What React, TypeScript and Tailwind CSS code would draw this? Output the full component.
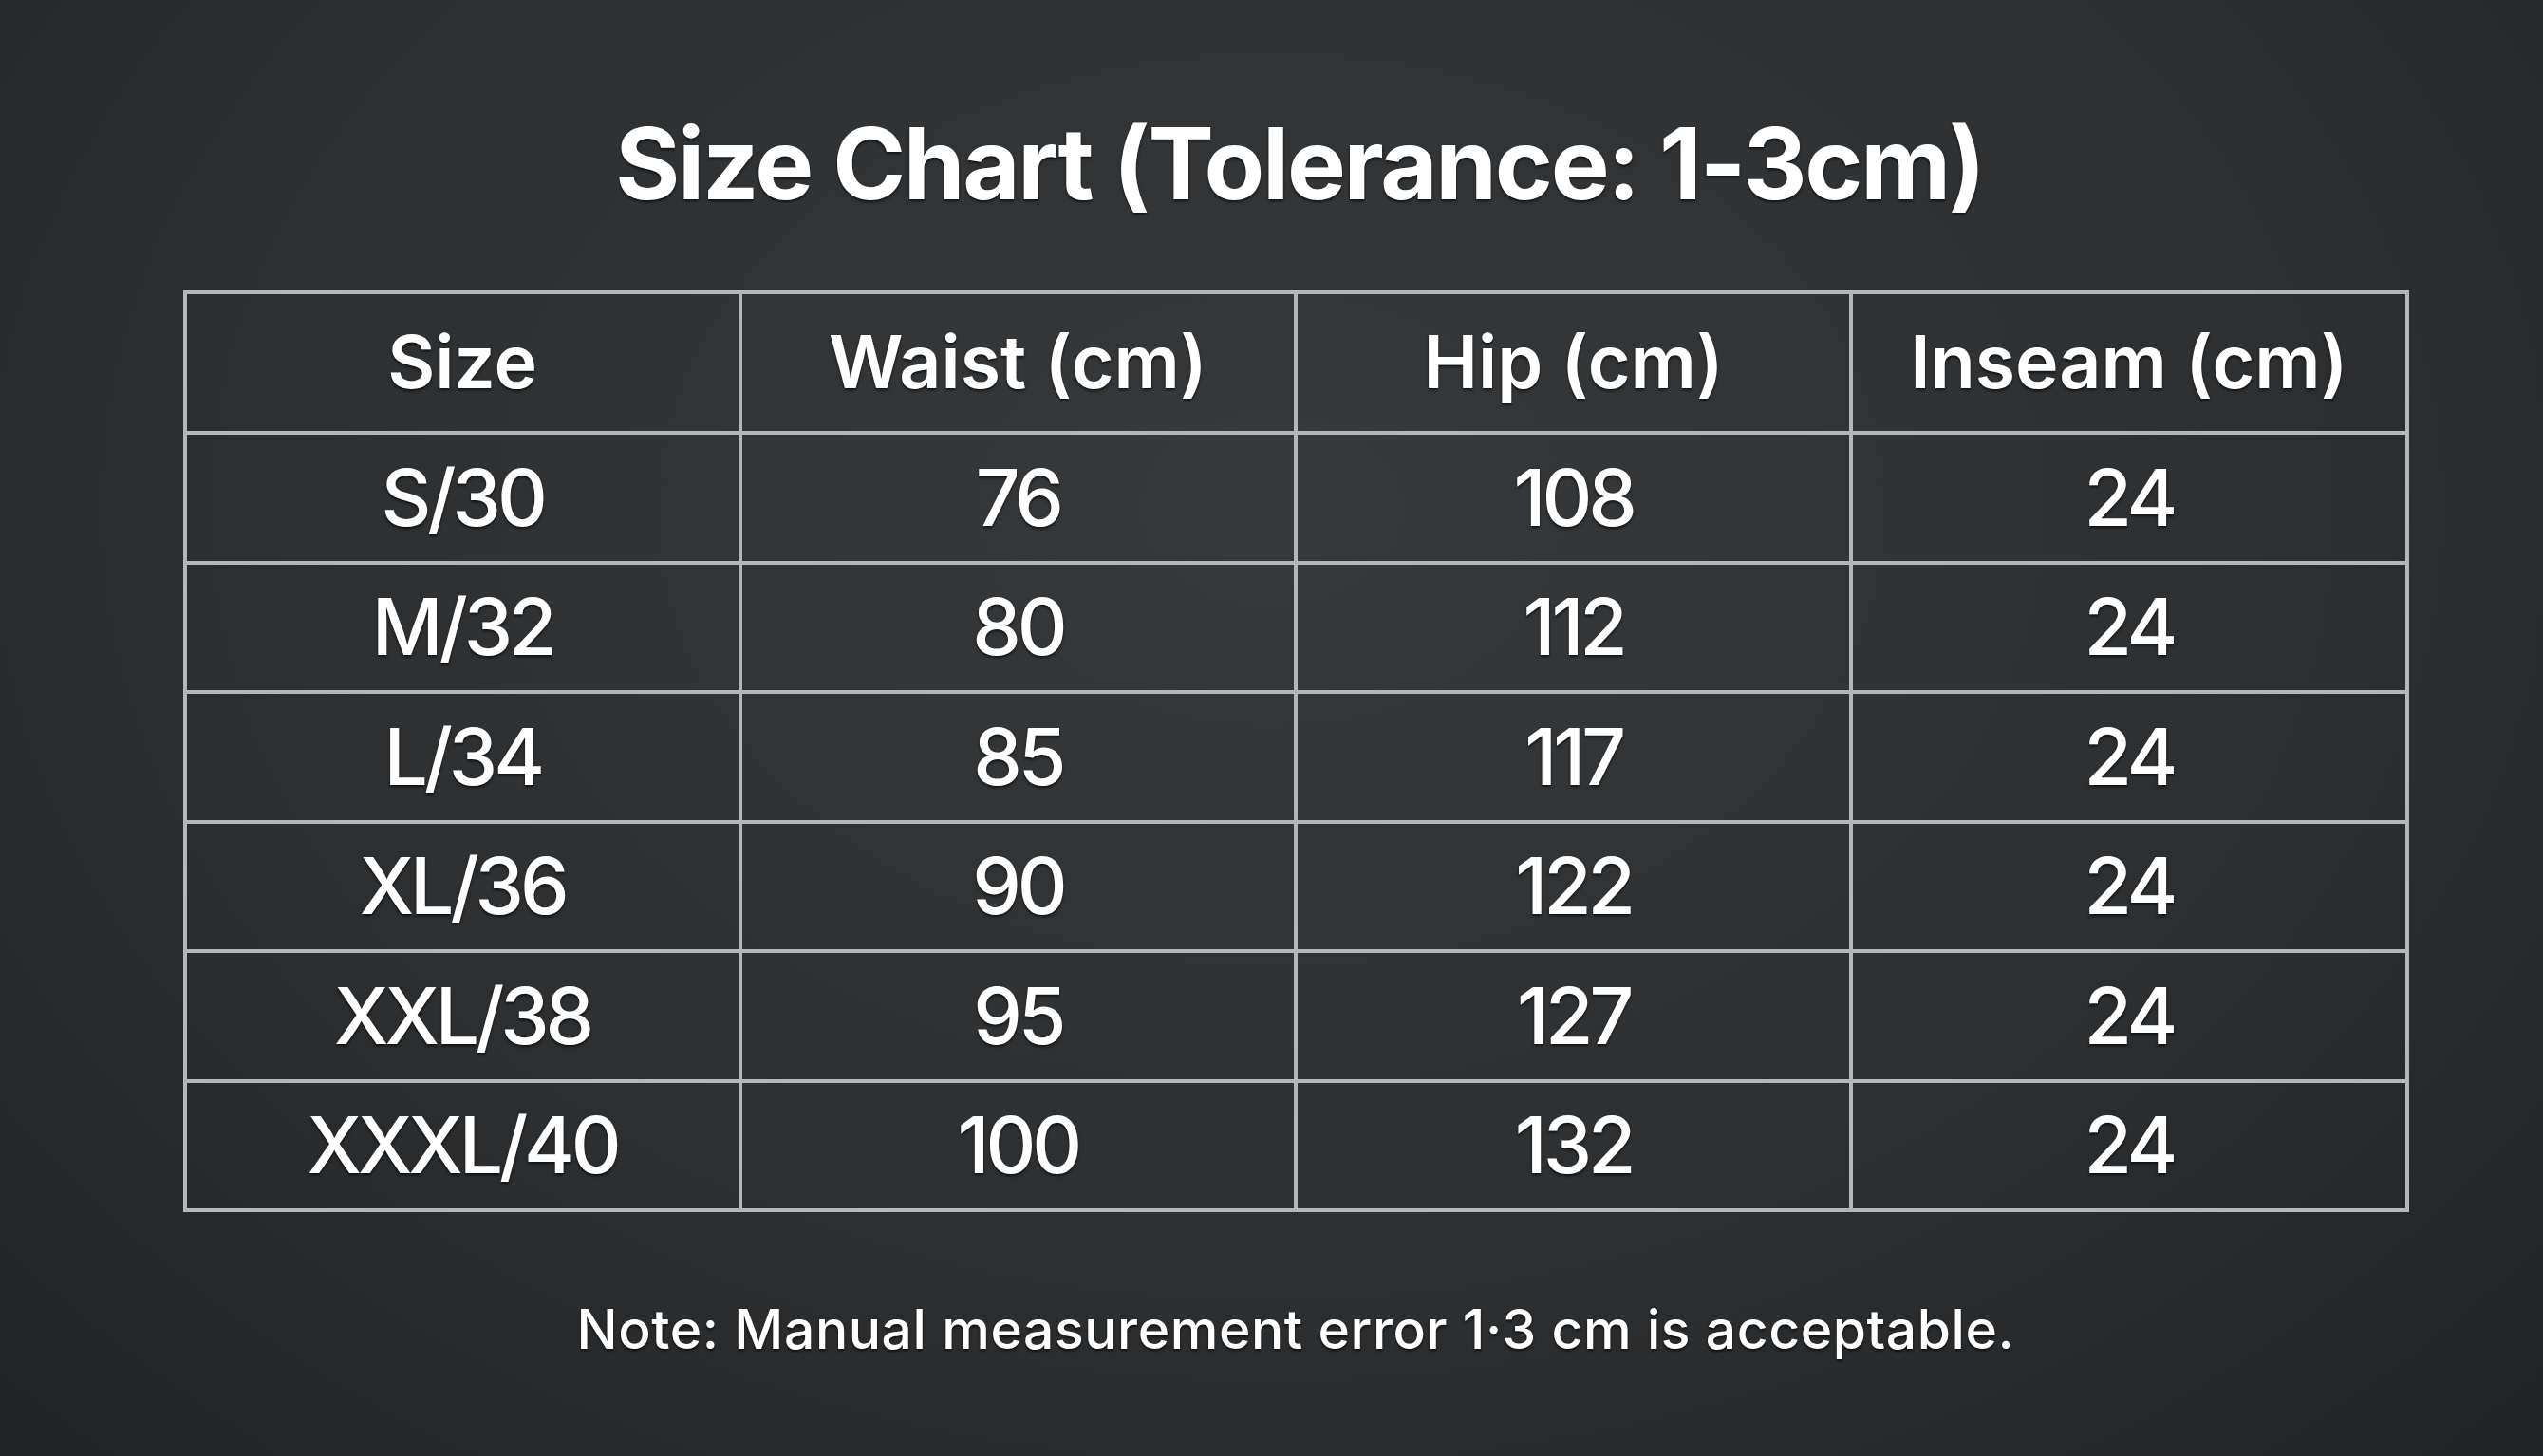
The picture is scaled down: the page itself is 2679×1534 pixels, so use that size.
const headers = ["Size", "Waist (cm)", "Hip (cm)", "Inseam (cm)"];

const rows = [
  ["S/30", "76", "108", "24"],
  ["M/32", "80", "112", "24"],
  ["L/34", "85", "117", "24"],
  ["XL/36", "90", "122", "24"],
  ["XXL/38", "95", "127", "24"],
  ["XXXL/40", "100", "132", "24"],
];

export default function App() {
  return (
    <div className="min-h-screen w-full bg-[radial-gradient(ellipse_at_50%_35%,#37393b_0%,#2d2f31_55%,#212325_100%)] flex flex-col items-center pl-[51px] pt-[120px] font-['Inter',sans-serif] text-white [text-shadow:0_2px_3px_rgba(0,0,0,0.65)]">
      <h1 className="ml-[8px] text-[104px] font-bold leading-none tracking-[-0.022em]">Size Chart (Tolerance: 1-3cm)</h1>

      <table className="mt-[82px] w-[2345px] table-fixed border-collapse border-4 border-[#b4b6b8]">
        <thead>
          <tr className="h-[148px]">
            {headers.map((h) => (
              <th key={h} className="border-4 border-[#b4b6b8] text-[77px] font-semibold text-center align-middle">
                {h}
              </th>
            ))}
          </tr>
        </thead>
        <tbody>
          {rows.map((r) => (
            <tr key={r[0]} className="h-[136.5px]">
              {r.map((c, i) => (
                <td key={i} className="border-4 border-[#b4b6b8] text-[82px] font-medium tracking-[-0.05em] text-center align-middle">
                  {c}
                </td>
              ))}
            </tr>
          ))}
        </tbody>
      </table>

      <p className="mt-[95px] text-[57px] font-medium leading-none tracking-[0.01em]">Note: Manual measurement error 1·3 cm is acceptable.</p>
    </div>
  );
}
